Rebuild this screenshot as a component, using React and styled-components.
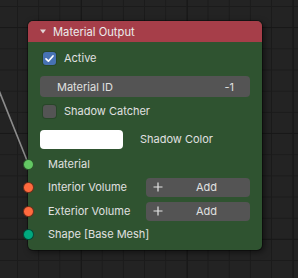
import React from 'react'
import styled, { createGlobalStyle } from 'styled-components'

const GlobalStyle = createGlobalStyle`
  html, body { margin: 0; padding: 0; background: #222222; }
  body { font-family: Inter, "Noto Sans", sans-serif; }
`

const Canvas = styled.div`
  position: relative;
  width: 298px;
  height: 278px;
  overflow: hidden;
  background-color: #232323;
  background-image:
    linear-gradient(to right, #181818 1px, transparent 1px),
    linear-gradient(to bottom, #181818 1px, transparent 1px),
    linear-gradient(to right, #1b1b1b 1px, transparent 1px),
    linear-gradient(to bottom, #1b1b1b 1px, transparent 1px);
  background-size: 105.9px 105.9px, 105.9px 105.9px, 21.18px 21.18px, 21.18px 21.18px;
  background-position: 81px 0, 0 27px, 17px 0, 0 6px;
`

const Wire = styled.svg`
  position: absolute;
  left: 0;
  top: 0;
`

const Node = styled.div`
  position: absolute;
  left: 28px;
  top: 21px;
  width: 234px;
  border-radius: 5px;
  background: #2f5330;
  box-shadow: 0 0 0 1px rgba(0, 0, 0, 0.35), 2px 2px 6px rgba(0, 0, 0, 0.55);
  color: #e0e0e0;
  font-size: 11px;
`

const Header = styled.div`
  height: 21px;
  display: flex;
  align-items: center;
  padding-left: 12px;
  gap: 7px;
  background: #a63e49;
  border-radius: 5px 5px 0 0;
  color: #ececec;
  font-size: 11.2px;
`

const Body = styled.div`
  display: flex;
  flex-direction: column;
  padding: 0 12px 6px 12px;
`

const Row = styled.div`
  position: relative;
  height: 20px;
  margin-top: ${p => p.$top}px;
  display: flex;
  align-items: center;
`

const CheckRow = styled(Row)`
  padding-left: 3px;
  gap: 8px;
`

const Check = styled.div`
  width: 13px;
  height: 13px;
  border-radius: 3px;
  background: ${p => (p.$on ? '#4772b3' : '#545454')};
  box-shadow: 0 0 0 1px rgba(0, 0, 0, 0.15);
  display: flex;
  align-items: center;
  justify-content: center;
`

const Field = styled(Row)`
  height: 21px;
  border-radius: 4px;
  background: #545454;
  padding: 0 16px 0 17px;
  justify-content: space-between;
`

const Swatch = styled.div`
  width: 83px;
  height: 19px;
  border-radius: 4px;
  background: #ffffff;
`

const SwatchRow = styled(Row)`
  gap: 17px;
`

const Socket = styled.span`
  position: absolute;
  left: -17px;
  top: 50%;
  width: 9px;
  height: 9px;
  margin-top: -5.5px;
  border-radius: 50%;
  background: ${p => p.$color};
  border: 1px solid rgba(0, 0, 0, 0.55);
`

const OutLabel = styled.span`
  padding-left: 8px;
  flex: 1;
`

const AddButton = styled.div`
  width: 104px;
  height: 19px;
  border-radius: 4px;
  background: #545454;
  display: flex;
  align-items: center;
  padding-left: 7px;
  box-sizing: border-box;
`

const AddText = styled.span`
  flex: 1;
  text-align: center;
`

const Label = styled.span`
  white-space: nowrap;
`

const Triangle = () => (
  <svg width="6" height="5" viewBox="0 0 6 5">
    <path d="M0 0.5 L6 0.5 L3 4.5 Z" fill="#e2d4d6" />
  </svg>
)

const Tick = () => (
  <svg width="11" height="11" viewBox="0 0 11 11">
    <path d="M2 5.8 L4.4 8.2 L9 3" fill="none" stroke="#ffffff" strokeWidth="1.7" strokeLinecap="round" strokeLinejoin="round" />
  </svg>
)

const Plus = () => (
  <svg width="10" height="10" viewBox="0 0 10 10">
    <path d="M5 0.5 V9.5 M0.5 5 H9.5" stroke="#e4e4e4" strokeWidth="1.2" />
  </svg>
)

const outputs = [
  { label: 'Material', color: '#63c763', top: 5 },
  { label: 'Interior Volume', color: '#ff6a3e', top: 3, add: true },
  { label: 'Exterior Volume', color: '#ff6a3e', top: 4, add: true },
  { label: 'Shape [Base Mesh]', color: '#00a87e', top: 3 },
]

export default function App() {
  return (
    <>
      <GlobalStyle />
      <Canvas>
        <Wire width="298" height="278">
          <path d="M-4 83 L28 163" stroke="#8c8c8c" strokeWidth="1.6" fill="none" />
        </Wire>
        <Node>
          <Header>
            <Triangle />
            <Label>Material Output</Label>
          </Header>
          <Body>
            <CheckRow $top={6}>
              <Check $on><Tick /></Check>
              <Label>Active</Label>
            </CheckRow>
            <Field $top={8}>
              <Label>Material ID</Label>
              <Label>-1</Label>
            </Field>
            <CheckRow $top={4}>
              <Check />
              <Label>Shadow Catcher</Label>
            </CheckRow>
            <SwatchRow $top={8}>
              <Swatch />
              <Label>Shadow Color</Label>
            </SwatchRow>
            {outputs.map(o => (
              <Row key={o.label} $top={o.top}>
                <Socket $color={o.color} />
                <OutLabel>{o.label}</OutLabel>
                {o.add && (
                  <AddButton>
                    <Plus />
                    <AddText>Add</AddText>
                  </AddButton>
                )}
              </Row>
            ))}
          </Body>
        </Node>
      </Canvas>
    </>
  )
}
